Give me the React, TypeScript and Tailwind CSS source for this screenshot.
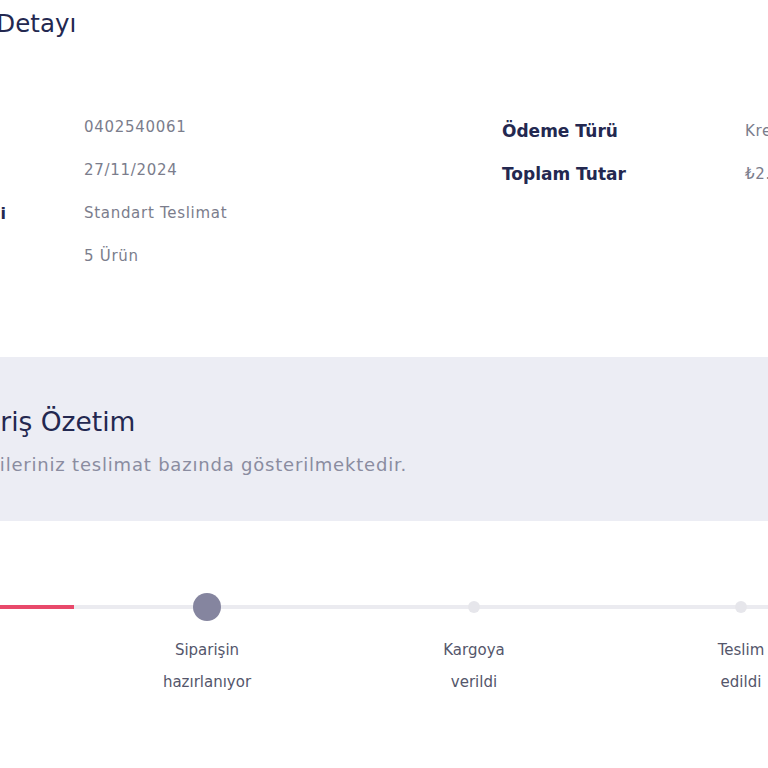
import React from "react";

const font = { fontFamily: "'DejaVu Sans', 'Noto Sans', sans-serif" };

function Row({ label, value }: { label: string; value: string }) {
  return (
    <div className="flex h-[43px] items-center">
      <div className="w-[232px] shrink-0 whitespace-nowrap text-[16px] font-bold text-[#232850]">{label}</div>
      <div className="text-[15px] tracking-[0.7px] text-[#7b7d8c]">{value}</div>
    </div>
  );
}

function RightRow({ label, value }: { label: string; value: string }) {
  return (
    <div className="flex h-[43px] items-center">
      <div className="w-[243px] shrink-0 whitespace-nowrap text-[17px] font-bold text-[#232850]">{label}</div>
      <div className="whitespace-nowrap text-[15px] tracking-[0.7px] text-[#7b7d8c]">{value}</div>
    </div>
  );
}

function Step({ l1, l2 }: { l1: string; l2: string }) {
  return (
    <div className="flex w-[140px] flex-col items-center whitespace-nowrap text-[15px] leading-[32px] text-[#54566b]">
      <span>{l1}</span>
      <span>{l2}</span>
    </div>
  );
}

export default function App() {
  return (
    <div className="h-[768px] w-[768px] overflow-hidden bg-white" style={font}>
      <div className="-ml-[160px] w-[1200px]">
        <div className="whitespace-nowrap pl-[66px] pt-[8px] text-[24.5px] leading-[32px] text-[#232850]">Sipariş Detayı</div>
        <div className="mt-[66px] flex">
          <div className="flex w-[662px] shrink-0 flex-col pl-[12px]">
            <Row label="Sipariş No" value="0402540061" />
            <Row label="Sipariş Tarihi" value="27/11/2024" />
            <Row label="Teslimat Yöntemi" value="Standart Teslimat" />
            <Row label="Ürün Sayısı" value="5 Ürün" />
          </div>
          <div className="flex flex-col pt-[4px]">
            <RightRow label="Ödeme Türü" value="Kredi Kartı" />
            <RightRow label="Toplam Tutar" value="₺2.459,90" />
          </div>
        </div>
        <div className="mt-[79px] flex h-[164px] flex-col justify-center whitespace-nowrap bg-[#ecedf4] pt-[4px]">
          <div className="pl-[103px] text-[26.5px] leading-[34px] text-[#232850]">Sipariş Özetim</div>
          <div className="mt-[12px] pl-[51px] text-[18px] tracking-[0.8px] text-[#8a8ca0]">Sipariş bilgileriniz teslimat bazında gösterilmektedir.</div>
        </div>
        <div className="relative mt-[72px] h-[28px]">
          <div className="absolute left-0 right-0 top-[12px] h-[4px] bg-[#ebebf0]" />
          <div className="absolute left-0 top-[12px] h-[4px] w-[234px] bg-[#e8496b]" />
          <div className="absolute left-[353px] top-0 h-[28px] w-[28px] rounded-full bg-[#85859f]" />
          <div className="absolute left-[628px] top-[8px] h-[12px] w-[12px] rounded-full bg-[#e6e6eb]" />
          <div className="absolute left-[895px] top-[8px] h-[12px] w-[12px] rounded-full bg-[#e6e6eb]" />
        </div>
        <div className="mt-[13px] flex pl-[297px]">
          <Step l1="Siparişin" l2="hazırlanıyor" />
          <div className="w-[127px]" />
          <Step l1="Kargoya" l2="verildi" />
          <div className="w-[127px]" />
          <Step l1="Teslim" l2="edildi" />
        </div>
      </div>
    </div>
  );
}
